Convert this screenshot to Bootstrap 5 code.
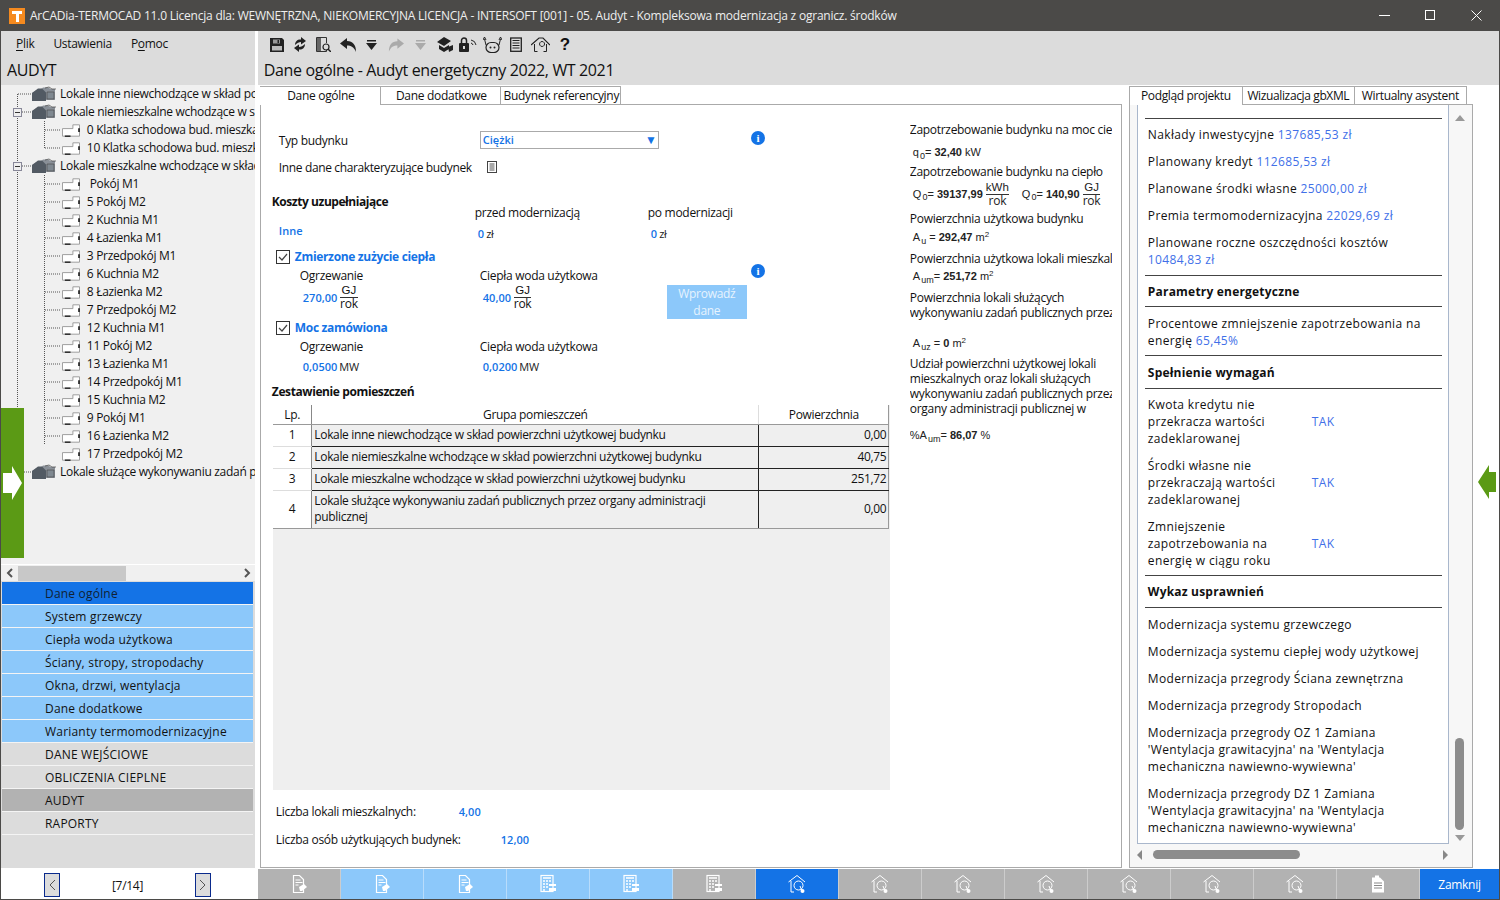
<!DOCTYPE html>
<html lang="pl">
<head>
<meta charset="utf-8">
<title>ArCADia-TERMOCAD</title>
<link href="https://cdn.jsdelivr.net/npm/bootstrap@5.3.0/dist/css/bootstrap.min.css" rel="stylesheet">
<style>
html,body{height:900px;overflow:hidden;}
body{font-family:"Open Sans","Noto Sans",sans-serif;font-size:12px;line-height:17px;letter-spacing:-.3px;color:#111;background:#fff;}
.appwin{width:1500px;height:900px;border:1px solid #4b4a48;border-top:0;overflow:hidden;}
.tbar{height:31px;background:#4b4a48;color:#eee;padding-left:8px;}
.ttl{margin-left:5px;letter-spacing:-.22px;white-space:nowrap;}
.winbtn{width:46px;height:30px;}
.content{height:868px;}
.leftcol{width:258px;}
.leftwrap{width:254px;height:100%;background:#dcdcdc;}
.lhead{height:54px;padding:4px 0 0 15px;background:#dcdcdc;}
.menuline{gap:19px;height:26px;}
.lhead h1{font-size:16px;font-weight:400;margin:-1px 0 0 -9px;line-height:20px;letter-spacing:-.4px;}
.u1{text-decoration:underline;text-underline-offset:2px;}
.treebox{height:479px;background:#f0f0f0;position:relative;overflow:hidden;}
.trow{height:18px;line-height:18px;white-space:nowrap;overflow:hidden;color:#111;}
.trow.l0{padding-left:31px;}
.trow.l1{padding-left:61px;}
.trow svg{flex:none;margin-right:4px;}
.trow.l0 svg{margin-right:4px;}
.tlines{position:absolute;left:0;top:0;pointer-events:none;}
.gbar{position:absolute;left:0;top:323px;width:23px;height:150px;background:#5b9a15;}
.gbar svg{position:absolute;left:2px;top:58px;}
.lscroll{height:17px;background:#f0f0f0;border-top:1px solid #fff;}
.lthumb{width:108px;height:15px;background:#c8c8c8;}
.larr{width:17px;flex:none;text-align:center;}
.larr svg{display:block;margin:0 auto;}
.navlist{padding:1px 0 0 1px;}
.navi{height:22px;line-height:24px;margin-bottom:1px;padding-left:43px;width:251px;white-space:nowrap;letter-spacing:.2px;box-shadow:0 1px 0 #f4f4f4;}
.navi.ac{background:#1473e6;color:#123;}
.navi.lb{background:#8cc8fa;}
.navi.gy{background:#dcdcdc;}
.navi.dk{background:#b2b2b2;}
.maincol{width:1242px;margin-left:-1px;}
.mhead{height:54px;background:#dcdcdc;padding:0 0 0 12px;}
.toolrow{height:27px;align-items:center;margin-bottom:2px;}
.toolrow svg{flex:none;display:block;}
.g6{margin-right:6px;}.g8{margin-right:8px;}.g9{margin-right:9px;}.g10{margin-right:10px;}.g11{margin-right:11px;}
.qm{font-size:17px;line-height:17px;font-weight:700;font-family:"Liberation Sans",sans-serif;}
.mhead h2{font-size:16px;font-weight:400;line-height:20px;margin:0 0 0 -6px;letter-spacing:-.37px;}
.mbody{height:783px;}
.midpane{width:864px;padding-left:2px;padding-top:1px;}
.tabline{height:19px;}
.tabx{height:19px;line-height:18px;text-align:center;border:1px solid #aaa;border-left:0;white-space:nowrap;background:#fff;width:120px;padding-left:2px;}
.tabx.on{border-bottom:0;width:121px;}
.tabfill{flex:1;border-bottom:1px solid #aaa;}
.tabpanel{height:763px;border:1px solid #aaa;border-top:0;display:flex;background:#fff;}
.formcol{width:640px;padding-left:11px;}
.infocol{width:202px;margin-left:9px;padding-top:17px;overflow:hidden;white-space:nowrap;line-height:15px;}
.infocol p{margin:0;}
.frow{display:flex;}
.c1{width:208px;flex:none;}
.c2{width:173px;flex:none;}
.blu{color:#1473e6;font-weight:600;font-size:11px;letter-spacing:0;}
.lblb{font-weight:700;color:#111;letter-spacing:-.45px;}
.blb{color:#1473e6;font-weight:700;letter-spacing:-.33px;}
.sel{width:179px;height:18px;border:1px solid #aaa;padding-left:2px;line-height:16px;color:#1473e6;font-weight:600;font-size:11px;letter-spacing:0;}
.seltri{font-size:12px;padding-right:1px;}
.ibadge{width:14px;height:14px;flex:none;border-radius:50%;background:#1473e6;color:#fff;font:700 11px/14px "Liberation Serif",serif;text-align:center;}
.unit{font-size:11px;color:#222;letter-spacing:-.2px;margin-left:2px;}
.frac{display:inline-flex;flex-direction:column;text-align:center;line-height:11.5px;font-size:12px;vertical-align:middle;}
.frac span:first-child{border-bottom:1px solid #333;font-family:"Liberation Sans",sans-serif;font-size:11.5px;letter-spacing:0;}
.cbx{width:14px;height:14px;flex:none;margin:0 5px 0 0;}
.wprow{width:80px;height:34px;background:#8cc8fa;color:#e6f3fe;text-align:center;line-height:16.5px;padding-top:1px;}
.r-type{padding-top:26px;height:51px;}
.r-type .c1{padding-left:7px;padding-top:1px;}
.badge1{margin-left:92px;}
.r-inne{height:24px;padding:0 0 2px 7px;align-items:center;letter-spacing:-.37px;}
.r-inne svg{margin-left:14px;}
.h-koszty{margin-top:13px;height:17px;}
.r-przed{height:16px;margin-top:-6px;}
.r-przed .c1{width:203px;}
.r-val{margin-top:2px;height:24px;}
.r-val .c1{padding-left:7px;width:206px;}
.pad3{padding-top:3px;}
.r-chk{height:17px;padding-left:4px;margin-top:2px;align-items:center;}
.r-chk2{margin-top:0;}
.chkw{width:456px;flex:none;}
.badge2{margin-top:28px;}
.r-lbl{margin-top:2px;height:18px;}
.r-lbl .c1,.r-lbl2 .c1{padding-left:28px;}
.r-lbl2{margin-top:2px;height:18px;}
.r-frac{height:34px;}
.r-frac .c1{padding-left:31px;height:24px;}
.f2{width:187px;padding-left:3px;height:24px;}
.r-mw{height:20px;align-items:center;}
.r-mw .c1{padding-left:31px;}
.pl3{padding-left:3px;}
.h-zest{margin-top:7px;height:22px;letter-spacing:-.4px;}
.datab{width:617px;height:385px;background:#efefef;margin-left:1px;}
.tbl{width:616px;border-collapse:collapse;table-layout:fixed;letter-spacing:-.34px;color:#111;}
.cw1{width:39px;}.cw2{width:447px;}.cw3{width:130px;}
.tbl th{background:#fff;font-weight:400;text-align:center;height:19px;padding:1px 0 0;border:0;border-right:1px solid #ddd;border-bottom:1px solid #999;line-height:16px;}
.tbl th:first-child{border-right:1px solid #888;}
.tbl th:last-child{border-right:1px solid #999;}
.tbl td{background:#efefef;border:1px solid #222;border-left:0;border-top:0;padding:0 2px;height:22px;line-height:16px;}
.tbl td:first-child{background:#fff;text-align:center;padding:0;border-right:1px solid #888;border-bottom:1px solid #ddd;}
.tbl td:last-child{border-right:1px solid #999;text-align:right;}
.tbl tr:last-child td{border-bottom:1px solid #999;height:38px;}
.lic1{padding:13px 0 0 4px;height:28px;}
.lic2{padding:13px 0 0 4px;height:28px;}
.lw1{width:183px;}.lw2{width:225px;}
.mono{font:11px/13px "Liberation Sans",sans-serif;color:#222;letter-spacing:0;}
.mono sub{font-size:9px;bottom:-.3em;margin-left:1px;}
.mono sup{font-size:8px;}
.mono .frac{font-family:"Open Sans",sans-serif;letter-spacing:-.2px;}
.m1{margin:9px 0 5px 3px!important;}
.m2{margin:3px 0 0 3px!important;height:24px;}
.q2{margin-left:13px;}
.p3{margin-top:5px!important;}
.m4{margin:5px 0 7px 3px!important;}
.m5{margin:4px 0 7px 3px!important;}
.m6{margin:17px 0 6px 3px!important;}
.m7{margin:13px 0 0!important;}
.rightpane{width:344px;margin-left:7px;padding-top:1px;letter-spacing:.35px;}
.rtabx{height:19px;line-height:17px;text-align:center;border:1px solid #aaa;border-left:0;white-space:nowrap;background:#fff;letter-spacing:-.37px;width:112px;}
.rtabx.first{border-left:1px solid #aaa;border-bottom:0;width:114px;}
.rpanel{height:763px;border:1px solid #aaa;border-top:0;background:#f7f7f7;padding-left:7px;}
.rlist{width:312px;height:739px;background:#fff;border:1px solid #a9b7cc;border-top:0;padding:0 12px 0 10px;overflow:hidden;}
.rline{border-top:1px solid #444;margin:0 -6px 0 -3px;}
.rl0{margin-top:13px;}
.rl1{margin-top:7px;margin-bottom:7px;}
.rl2{margin-top:6px;margin-bottom:8px;}
.rl3{margin-top:6px;margin-bottom:8px;}
.rl4{margin-top:7px;margin-bottom:7px;}
.rl5{margin-top:6px;margin-bottom:7px;}
.rl6{margin-top:7px;margin-bottom:8px;}
.rp{margin:0;line-height:17px;}
.mt7{margin-top:7px;}
.mt10{margin-top:10px;}
.rtxt{color:#4170e8;}
.rt-b{font-weight:700;color:#111;letter-spacing:.2px;}
.rq{width:164px;flex:none;}
.vscroll{width:18px;height:739px;margin-left:2px;position:relative;}
.vthumb{position:absolute;left:4px;bottom:14px;width:9px;height:92px;background:#8c8c8c;border-radius:5px;}
.tri-up{position:absolute;left:4px;top:10px;width:0;height:0;border:5px solid transparent;border-top:0;border-bottom:6px solid #999;}
.tri-dn{position:absolute;left:4px;bottom:3px;width:0;height:0;border:5px solid transparent;border-bottom:0;border-top:6px solid #999;}
.hscroll{height:20px;width:314px;position:relative;}
.hthumb{position:absolute;left:16px;top:6px;width:147px;height:9px;background:#8c8c8c;border-radius:5px;}
.tri-l{position:absolute;left:0;top:6px;width:0;height:0;border:5px solid transparent;border-left:0;border-right:5px solid #888;}
.tri-r{position:absolute;right:3px;top:6px;width:0;height:0;border:5px solid transparent;border-right:0;border-left:5px solid #888;}
.sideg{width:22px;height:783px;padding:380px 0 0 5px;}
.foot{position:relative;margin-top:-31px;height:31px;}
.lfoot{height:31px;background:#fff;width:256px;padding:3px 46px 0 43px;}
.pgbtn{width:16px;height:24px;border:1px solid #0a2a8c;background:#dcdcdc;}
.bbwrap{margin-left:1px;background:#fff;padding-top:1px;}
.bbtn{width:83px;height:30px;background:#b2b2b2;border-right:1px solid #ccc;flex:none;}
.bbtn.lb{background:#8cc8fa;border-right-color:#b8dcfb;}
.bbtn.ac{background:#1473e6;}
.bbtn.cl{background:#1473e6;width:79px;color:#fff;border:0;}
</style>
</head>
<body>
<svg width="0" height="0" class="position-absolute">
 <defs>
  <symbol id="ifold" viewBox="0 0 24 16"><path d="M0 15V7l5-3h3l3-2.500h5l3 1.500h4v11H10v1z" fill="#8a9098"/><path d="M0 15V7l6-4.500h4l4 4V15z" fill="#525a63"/><path d="M15 6h7v7h-7z" fill="#7f8890" stroke="#444" stroke-width=".6"/><path d="M13 2l4-1 3 2h4" fill="none" stroke="#444" stroke-width=".7"/></symbol>
  <symbol id="iroom" viewBox="0 0 19 13"><path d="M.5 4.500h11V.5h7v12H.5z" fill="#fff" stroke="#999" stroke-width="1"/><path d="M3 12.500h6" stroke="#222" stroke-width="1.500"/><path d="M18 4v4" stroke="#333" stroke-width="2"/></symbol>
  <symbol id="ipage" viewBox="0 0 20 20"><path d="M4.500 1.500h6l4 4v13h-10z" fill="none" stroke="#fff" stroke-width="1.200"/><path d="M6.500 6h5M6.500 8.500h7M6.500 11h3" stroke="#fff"/><path d="M10 13l5-3 3 3-5 4h-2z" fill="#fff"/></symbol>
  <symbol id="icalc" viewBox="0 0 20 20"><rect x="3" y="1.500" width="12" height="16" fill="none" stroke="#fff" stroke-width="1.200"/><path d="M5 4h8M5 7h2M8 7h2M11 7h2M5 10h2M8 10h2M5 13h2M8 13h2M5 16h2" stroke="#fff" stroke-width="1.500"/><path d="M11 10h7v2h-7zM11 14h7v3h-7z" fill="#fff"/></symbol>
  <symbol id="ihouse" viewBox="0 0 20 20"><path d="M1.500 8L10 1.500 18 8" fill="none" stroke="#fff" stroke-width="1"/><path d="M4 7v11h3" fill="none" stroke="#fff" stroke-width="1"/><circle cx="11.500" cy="11.500" r="4.500" fill="none" stroke="#fff" stroke-width="1"/><path d="M13 12l2 5" stroke="#fff"/><circle cx="15.500" cy="17" r="2" fill="#fff"/></symbol>
  <symbol id="idoc" viewBox="0 0 20 20"><path d="M4 3.500h3V1.500h4v2h1l4 4v11H4z" fill="#fff"/><path d="M6 9h8M6 11.500h8M6 14h8" stroke="#888"/></symbol>
  <symbol id="ichk" viewBox="0 0 14 14"><rect x=".5" y=".5" width="13" height="13" fill="#fff" stroke="#333"/><path d="M3 7l3 3 5-6" fill="none" stroke="#444" stroke-width="1.200"/></symbol>
 </defs>
</svg>
<div class="appwin">
 <div class="tbar d-flex align-items-center">
  <svg width="16" height="16" viewBox="0 0 16 16"><rect width="16" height="16" fill="#f58a1f"/><path d="M3 3h10v3H10v8H7V6H3z" fill="#fff"/></svg>
  <span class="ttl">ArCADia-TERMOCAD 11.0 Licencja dla: WEWNĘTRZNA, NIEKOMERCYJNA LICENCJA - INTERSOFT [001] - 05. Audyt - Kompleksowa modernizacja z ogranicz. środków</span>
  <div class="ms-auto d-flex">
   <div class="winbtn d-flex align-items-center justify-content-center"><svg width="11" height="11"><path d="M0 5.500h11" stroke="#fff"/></svg></div>
   <div class="winbtn d-flex align-items-center justify-content-center"><svg width="11" height="11"><rect x=".5" y=".5" width="9" height="9" fill="none" stroke="#fff"/></svg></div>
   <div class="winbtn d-flex align-items-center justify-content-center"><svg width="11" height="11"><path d="M.5.500l10 10M10.500.500l-10 10" stroke="#fff"/></svg></div>
  </div>
 </div>
 <div class="content d-flex">
  <div class="leftcol d-flex flex-column">
   <div class="leftwrap">
    <div class="lhead">
     <div class="menuline d-flex"><span><span class="u1">P</span>lik</span><span>Ustawienia</span><span>P<span class="u1">o</span>moc</span></div>
     <h1>AUDYT</h1>
    </div>
    <div class="treebox">
     <svg class="tlines" width="60" height="400"><path d="M16.500 9V387M17 9h14M17 27h14M17 81h14M17 387h14M43.500 36v27M44 45h16M44 63h16M43.500 90v270M44 99h16M44 117h16M44 135h16M44 153h16M44 171h16M44 189h16M44 207h16M44 225h16M44 243h16M44 261h16M44 279h16M44 297h16M44 315h16M44 333h16M44 351h16" fill="none" stroke="#555" stroke-dasharray="1 1"/><rect x="12.500" y="23.500" width="8" height="8" fill="#eee" stroke="#889"/><path d="M14 27.500h5" stroke="#333"/><rect x="12.500" y="77.500" width="8" height="8" fill="#eee" stroke="#889"/><path d="M14 81.500h5" stroke="#333"/></svg>
     <div class="trow l0 d-flex align-items-center"><svg width="24" height="16"><use href="#ifold"/></svg>Lokale inne niewchodzące w skład powierzchni</div>
     <div class="trow l0 d-flex align-items-center"><svg width="24" height="16"><use href="#ifold"/></svg>Lokale niemieszkalne wchodzące w skład</div>
     <div class="trow l1 d-flex align-items-center"><svg width="18" height="13"><use href="#iroom"/></svg>&nbsp;0 Klatka schodowa bud. mieszkalnego</div>
     <div class="trow l1 d-flex align-items-center"><svg width="18" height="13"><use href="#iroom"/></svg>&nbsp;10 Klatka schodowa bud. mieszkalnego</div>
     <div class="trow l0 d-flex align-items-center"><svg width="24" height="16"><use href="#ifold"/></svg>Lokale mieszkalne wchodzące w skład powierzchni</div>
     <div class="trow l1 d-flex align-items-center"><svg width="18" height="13"><use href="#iroom"/></svg>&nbsp;&nbsp;Pokój M1</div>
     <div class="trow l1 d-flex align-items-center"><svg width="18" height="13"><use href="#iroom"/></svg>&nbsp;5 Pokój M2</div>
     <div class="trow l1 d-flex align-items-center"><svg width="18" height="13"><use href="#iroom"/></svg>&nbsp;2 Kuchnia M1</div>
     <div class="trow l1 d-flex align-items-center"><svg width="18" height="13"><use href="#iroom"/></svg>&nbsp;4 Łazienka M1</div>
     <div class="trow l1 d-flex align-items-center"><svg width="18" height="13"><use href="#iroom"/></svg>&nbsp;3 Przedpokój M1</div>
     <div class="trow l1 d-flex align-items-center"><svg width="18" height="13"><use href="#iroom"/></svg>&nbsp;6 Kuchnia M2</div>
     <div class="trow l1 d-flex align-items-center"><svg width="18" height="13"><use href="#iroom"/></svg>&nbsp;8 Łazienka M2</div>
     <div class="trow l1 d-flex align-items-center"><svg width="18" height="13"><use href="#iroom"/></svg>&nbsp;7 Przedpokój M2</div>
     <div class="trow l1 d-flex align-items-center"><svg width="18" height="13"><use href="#iroom"/></svg>&nbsp;12 Kuchnia M1</div>
     <div class="trow l1 d-flex align-items-center"><svg width="18" height="13"><use href="#iroom"/></svg>&nbsp;11 Pokój M2</div>
     <div class="trow l1 d-flex align-items-center"><svg width="18" height="13"><use href="#iroom"/></svg>&nbsp;13 Łazienka M1</div>
     <div class="trow l1 d-flex align-items-center"><svg width="18" height="13"><use href="#iroom"/></svg>&nbsp;14 Przedpokój M1</div>
     <div class="trow l1 d-flex align-items-center"><svg width="18" height="13"><use href="#iroom"/></svg>&nbsp;15 Kuchnia M2</div>
     <div class="trow l1 d-flex align-items-center"><svg width="18" height="13"><use href="#iroom"/></svg>&nbsp;9 Pokój M1</div>
     <div class="trow l1 d-flex align-items-center"><svg width="18" height="13"><use href="#iroom"/></svg>&nbsp;16 Łazienka M2</div>
     <div class="trow l1 d-flex align-items-center"><svg width="18" height="13"><use href="#iroom"/></svg>&nbsp;17 Przedpokój M2</div>
     <div class="trow l0 d-flex align-items-center"><svg width="24" height="16"><use href="#ifold"/></svg>Lokale służące wykonywaniu zadań publicznych</div>
     <div class="gbar"><svg width="20" height="34" viewBox="0 0 20 34"><path d="M0 7h9V0l10 17L9 34v-7H0z" fill="#fff"/></svg></div>
    </div>
    <div class="lscroll d-flex align-items-center"><span class="larr"><svg width="8" height="10"><path d="M6 1L2 5l4 4" fill="none" stroke="#555" stroke-width="2"/></svg></span><div class="lthumb"></div><span class="larr ms-auto"><svg width="8" height="10"><path d="M2 1l4 4-4 4" fill="none" stroke="#555" stroke-width="2"/></svg></span></div>
    <div class="navlist">
     <div class="navi ac">Dane ogólne</div>
     <div class="navi lb">System grzewczy</div>
     <div class="navi lb">Ciepła woda użytkowa</div>
     <div class="navi lb">Ściany, stropy, stropodachy</div>
     <div class="navi lb">Okna, drzwi, wentylacja</div>
     <div class="navi lb">Dane dodatkowe</div>
     <div class="navi lb">Warianty termomodernizacyjne</div>
     <div class="navi gy">DANE WEJŚCIOWE</div>
     <div class="navi gy">OBLICZENIA CIEPLNE</div>
     <div class="navi dk">AUDYT</div>
     <div class="navi gy">RAPORTY</div>
    </div>
   </div>
  </div>
  <div class="maincol">
   <div class="mhead">
    <div class="toolrow d-flex">
     <svg class="g10" width="14" height="14" viewBox="0 0 14 14"><path d="M0 0h12l2 2v12H0z" fill="#222"/><path d="M3 1.500h7v4H3z" fill="#999"/><path d="M7.500 2h1.500v3H7.500z" fill="#222"/><path d="M2 8h10v4.500H2z" fill="#bbb"/></svg>
     <svg class="g10" width="12" height="15" viewBox="0 0 12 15"><path d="M1 8C1 4 4 2 7 2.500V0l5 4-5 3.500V5C5 5 3 6 1 8z" fill="#222"/><path d="M11 7c0 4-3 6-6 5.500V15L0 11l5-3.500V10c2 0 4-1 6-3z" fill="#222"/></svg>
     <svg class="g9" width="15" height="15" viewBox="0 0 15 15"><path d="M.5.500h10v14H.5z" fill="none" stroke="#333"/><path d="M1 1h4v13H1z" fill="#666"/><path d="M7 6h4v2H7z" fill="#ddd"/><circle cx="10" cy="10" r="3" fill="#ddd" stroke="#222" stroke-width="1.200"/><path d="M12 12l3 3" stroke="#222" stroke-width="1.500"/></svg>
     <svg class="g9" width="17" height="14" viewBox="0 0 17 14"><path d="M7 0L0 5.500 7 11V7.500c4 0 7 1.500 9 6.500 0-7-3-11-9-11z" fill="#222"/></svg>
     <svg class="g11" width="11" height="10" viewBox="0 0 11 10"><path d="M1 0h9v1.500H1z" fill="#222"/><path d="M0 3h11l-5.500 7z" fill="#222"/></svg>
     <svg class="g11" width="16" height="14" viewBox="0 0 17 14"><path d="M10 0l7 5.500L10 11V7.500C6 7.500 3 9 1 14 1 7 4 3 10 3z" fill="#aaa"/></svg>
     <svg class="g11" width="11" height="10" viewBox="0 0 11 10"><path d="M1 0h9v1.500H1z" fill="#aaa"/><path d="M0 3h11l-5.500 7z" fill="#aaa"/></svg>
     <svg class="g6" width="16" height="15" viewBox="0 0 16 15"><path d="M0 5l7-5 7 4-7 5zM2 8l5 3 5-3v4l-5 3-5-3z" fill="#222"/><path d="M11 10l5-2v5l-4 2z" fill="#222"/></svg>
     <svg class="g6" width="18" height="15" viewBox="0 0 18 15"><rect x="0" y="6" width="10" height="9" rx="1" fill="#222"/><rect x="4" y="9" width="2" height="3" fill="#ddd"/><path d="M2.500 6V3.500a2.500 2.500 0 0 1 5 0V6" fill="none" stroke="#222" stroke-width="1.500"/><path d="M12 6a3 3 0 0 1 2 2M12 3a6 6 0 0 1 5 5" fill="none" stroke="#222"/></svg>
     <svg class="g8" width="19" height="16" viewBox="0 0 19 16"><rect x="3" y="5.500" width="13" height="10" rx="5" fill="none" stroke="#222" stroke-width="1.200"/><circle cx="7.500" cy="10.500" r="1" fill="#222"/><circle cx="11.500" cy="10.500" r="1" fill="#222"/><path d="M3 8L1.500 2M16 8l1.500-6M0 3l1.500-3L3 3M16 3l1.500-3L19 3" fill="none" stroke="#222"/></svg>
     <svg class="g9" width="12" height="15" viewBox="0 0 12 15"><rect x=".7" y="1" width="10.600" height="13.300" fill="none" stroke="#222" stroke-width="1.300"/><path d="M2.500 3.500h7M2.500 6h7M2.500 8.500h7M2.500 11h7" stroke="#222"/></svg>
     <svg class="g10" width="19" height="15" viewBox="0 0 19 15"><path d="M0 8l8-7h4l7 7" fill="none" stroke="#222" stroke-width="1.200"/><path d="M3.500 7v7.500h3M11 9.500a2.500 2.500 0 1 1 .1 0M15.500 7v7.500h-3" fill="none" stroke="#222"/></svg>
     <span class="qm">?</span>
    </div>
    <h2>Dane ogólne - Audyt energetyczny 2022, WT 2021</h2>
   </div>
   <div class="mbody d-flex">
    <div class="midpane">
     <div class="tabline d-flex">
      <div class="tabx on">Dane ogólne</div>
      <div class="tabx">Dane dodatkowe</div>
      <div class="tabx">Budynek referencyjny</div>
      <div class="tabfill"></div>
     </div>
     <div class="tabpanel">
      <div class="formcol">
       <div class="frow r-type"><div class="c1">Typ budynku</div><div class="sel d-flex justify-content-between"><span>Ciężki</span><span class="seltri">▼</span></div><div class="ibadge badge1">i</div></div>
       <div class="frow r-inne"><span>Inne dane charakteryzujące budynek</span><svg width="12" height="12" viewBox="0 0 12 12"><rect x="1.500" y=".5" width="9" height="11" fill="none" stroke="#444"/><path d="M3.500 3h5M3.500 5h5M3.500 7h5M3.500 9h5" stroke="#555"/></svg></div>
       <div class="lblb h-koszty">Koszty uzupełniające</div>
       <div class="frow r-przed"><div class="c1"></div><div class="c2">przed modernizacją</div><div>po modernizacji</div></div>
       <div class="frow r-val"><div class="c1 blu">Inne</div><div class="c2 pad3"><span class="blu">0</span><span class="unit">zł</span></div><div class="pad3"><span class="blu">0</span><span class="unit">zł</span></div></div>
       <div class="frow r-chk"><svg class="cbx"><use href="#ichk"/></svg><span class="blb chkw">Zmierzone zużycie ciepła</span><div class="ibadge badge2">i</div></div>
       <div class="frow r-lbl"><div class="c1">Ogrzewanie</div><div>Ciepła woda użytkowa</div></div>
       <div class="frow r-frac"><div class="c1 d-flex align-items-center"><span class="blu">270,00</span>&nbsp;<span class="frac"><span>GJ</span><span>rok</span></span></div><div class="f2 d-flex align-items-center"><span class="blu">40,00</span>&nbsp;<span class="frac"><span>GJ</span><span>rok</span></span></div><div class="wprow">Wprowadź dane</div></div>
       <div class="frow r-chk r-chk2"><svg class="cbx"><use href="#ichk"/></svg><span class="blb">Moc zamówiona</span></div>
       <div class="frow r-lbl2"><div class="c1">Ogrzewanie</div><div>Ciepła woda użytkowa</div></div>
       <div class="frow r-mw"><div class="c1"><span class="blu">0,0500</span><span class="unit">MW</span></div><div class="pl3"><span class="blu">0,0200</span><span class="unit">MW</span></div></div>
       <div class="lblb h-zest">Zestawienie pomieszczeń</div>
       <div class="datab">
        <table class="tbl">
         <colgroup><col class="cw1"><col class="cw2"><col class="cw3"></colgroup>
         <tr><th>Lp.</th><th>Grupa pomieszczeń</th><th>Powierzchnia</th></tr>
         <tr><td>1</td><td>Lokale inne niewchodzące w skład powierzchni użytkowej budynku</td><td>0,00</td></tr>
         <tr><td>2</td><td>Lokale niemieszkalne wchodzące w skład powierzchni użytkowej budynku</td><td>40,75</td></tr>
         <tr><td>3</td><td>Lokale mieszkalne wchodzące w skład powierzchni użytkowej budynku</td><td>251,72</td></tr>
         <tr><td>4</td><td>Lokale służące wykonywaniu zadań publicznych przez organy administracji publicznej</td><td>0,00</td></tr>
        </table>
       </div>
       <div class="d-flex lic1"><span class="lw1">Liczba lokali mieszkalnych:</span><span class="blu">4,00</span></div>
       <div class="d-flex lic2"><span class="lw2">Liczba osób użytkujących budynek:</span><span class="blu">12,00</span></div>
      </div>
      <div class="infocol">
       <p>Zapotrzebowanie budynku na moc cieplną</p>
       <p class="mono m1">q<sub>0</sub>= <b>32,40</b> kW</p>
       <p>Zapotrzebowanie budynku na ciepło</p>
       <p class="mono m2 d-flex align-items-center">Q<sub>0</sub>=&nbsp;<b>39137,99</b>&nbsp;<span class="frac"><span>kWh</span><span>rok</span></span><span class="q2">Q</span><sub>0</sub>=&nbsp;<b>140,90</b>&nbsp;<span class="frac"><span>GJ</span><span>rok</span></span></p>
       <p class="p3">Powierzchnia użytkowa budynku</p>
       <p class="mono m4">A<sub>u</sub> = <b>292,47</b> m<sup>2</sup></p>
       <p>Powierzchnia użytkowa lokali mieszkalnych</p>
       <p class="mono m5">A<sub>um</sub>= <b>251,72</b> m<sup>2</sup></p>
       <p>Powierzchnia lokali służących<br>wykonywaniu zadań publicznych przez</p>
       <p class="mono m6">A<sub>uz</sub> = <b>0</b> m<sup>2</sup></p>
       <p>Udział powierzchni użytkowej lokali<br>mieszkalnych oraz lokali służących<br>wykonywaniu zadań publicznych przez<br>organy administracji publicznej w</p>
       <p class="mono m7">%A<sub>um</sub>= <b>86,07</b> %</p>
      </div>
     </div>
    </div>
    <div class="rightpane">
     <div class="d-flex">
      <div class="rtabx first">Podgląd projektu</div>
      <div class="rtabx">Wizualizacja gbXML</div>
      <div class="rtabx">Wirtualny asystent</div>
      <div class="tabfill"></div>
     </div>
     <div class="rpanel">
      <div class="d-flex">
       <div class="rlist">
        <div class="rline rl0"></div>
        <p class="rp mt7">Nakłady inwestycyjne <span class="rtxt">137685,53 zł</span></p>
        <p class="rp mt10">Planowany kredyt <span class="rtxt">112685,53 zł</span></p>
        <p class="rp mt10">Planowane środki własne <span class="rtxt">25000,00 zł</span></p>
        <p class="rp mt10">Premia termomodernizacyjna <span class="rtxt">22029,69 zł</span></p>
        <p class="rp mt10">Planowane roczne oszczędności kosztów <span class="rtxt d-block">10484,83 zł</span></p>
        <div class="rline rl1"></div>
        <p class="rt-b rp">Parametry energetyczne</p>
        <div class="rline rl2"></div>
        <p class="rp">Procentowe zmniejszenie zapotrzebowania na energię <span class="rtxt">65,45%</span></p>
        <div class="rline rl3"></div>
        <p class="rt-b rp">Spełnienie wymagań</p>
        <div class="rline rl4"></div>
        <div class="d-flex align-items-center"><p class="rp rq">Kwota kredytu nie przekracza wartości zadeklarowanej</p><span class="rtxt">TAK</span></div>
        <div class="d-flex align-items-center mt10"><p class="rp rq">Środki własne nie przekraczają wartości zadeklarowanej</p><span class="rtxt">TAK</span></div>
        <div class="d-flex align-items-center mt10"><p class="rp rq">Zmniejszenie zapotrzebowania na energię w ciągu roku</p><span class="rtxt">TAK</span></div>
        <div class="rline rl5"></div>
        <p class="rt-b rp">Wykaz usprawnień</p>
        <div class="rline rl6"></div>
        <p class="rp">Modernizacja systemu grzewczego</p>
        <p class="rp mt10">Modernizacja systemu ciepłej wody użytkowej</p>
        <p class="rp mt10">Modernizacja przegrody Ściana zewnętrzna</p>
        <p class="rp mt10">Modernizacja przegrody Stropodach</p>
        <p class="rp mt10">Modernizacja przegrody OZ 1 Zamiana 'Wentylacja grawitacyjna' na 'Wentylacja mechaniczna nawiewno-wywiewna'</p>
        <p class="rp mt10">Modernizacja przegrody DZ 1 Zamiana 'Wentylacja grawitacyjna' na 'Wentylacja mechaniczna nawiewno-wywiewna'</p>
       </div>
       <div class="vscroll"><div class="tri-up"></div><div class="vthumb"></div><div class="tri-dn"></div></div>
      </div>
      <div class="hscroll"><div class="tri-l"></div><div class="hthumb"></div><div class="tri-r"></div></div>
     </div>
    </div>
    <div class="sideg"><svg width="18" height="34" viewBox="0 0 18 34"><path d="M18 7h-7V0L0 17l11 17v-7h7z" fill="#5b9a15"/></svg></div>
   </div>
  </div>
 </div>
 <div class="d-flex foot">
  <div class="lfoot d-flex align-items-center justify-content-between"><div class="pgbtn d-flex align-items-center justify-content-center"><svg width="7" height="12"><path d="M6 1L1 6l5 5" fill="none" stroke="#555"/></svg></div><span>[7/14]</span><div class="pgbtn d-flex align-items-center justify-content-center"><svg width="7" height="12"><path d="M1 1l5 5-5 5" fill="none" stroke="#555"/></svg></div></div>
  <div class="d-flex bbwrap">
   <div class="bbtn d-flex align-items-center justify-content-center"><svg width="20" height="20"><use href="#ipage"/></svg></div>
   <div class="bbtn lb d-flex align-items-center justify-content-center"><svg width="20" height="20"><use href="#ipage"/></svg></div>
   <div class="bbtn lb d-flex align-items-center justify-content-center"><svg width="20" height="20"><use href="#ipage"/></svg></div>
   <div class="bbtn lb d-flex align-items-center justify-content-center"><svg width="20" height="20"><use href="#icalc"/></svg></div>
   <div class="bbtn lb d-flex align-items-center justify-content-center"><svg width="20" height="20"><use href="#icalc"/></svg></div>
   <div class="bbtn d-flex align-items-center justify-content-center"><svg width="20" height="20"><use href="#icalc"/></svg></div>
   <div class="bbtn ac d-flex align-items-center justify-content-center"><svg width="20" height="20"><use href="#ihouse"/></svg></div>
   <div class="bbtn d-flex align-items-center justify-content-center"><svg width="20" height="20"><use href="#ihouse"/></svg></div>
   <div class="bbtn d-flex align-items-center justify-content-center"><svg width="20" height="20"><use href="#ihouse"/></svg></div>
   <div class="bbtn d-flex align-items-center justify-content-center"><svg width="20" height="20"><use href="#ihouse"/></svg></div>
   <div class="bbtn d-flex align-items-center justify-content-center"><svg width="20" height="20"><use href="#ihouse"/></svg></div>
   <div class="bbtn d-flex align-items-center justify-content-center"><svg width="20" height="20"><use href="#ihouse"/></svg></div>
   <div class="bbtn d-flex align-items-center justify-content-center"><svg width="20" height="20"><use href="#ihouse"/></svg></div>
   <div class="bbtn d-flex align-items-center justify-content-center"><svg width="20" height="20"><use href="#idoc"/></svg></div>
   <div class="bbtn cl d-flex align-items-center justify-content-center">Zamknij</div>
  </div>
 </div>
</div>
<script src="https://cdn.jsdelivr.net/npm/bootstrap@5.3.0/dist/js/bootstrap.bundle.min.js"></script>
</body>
</html>
